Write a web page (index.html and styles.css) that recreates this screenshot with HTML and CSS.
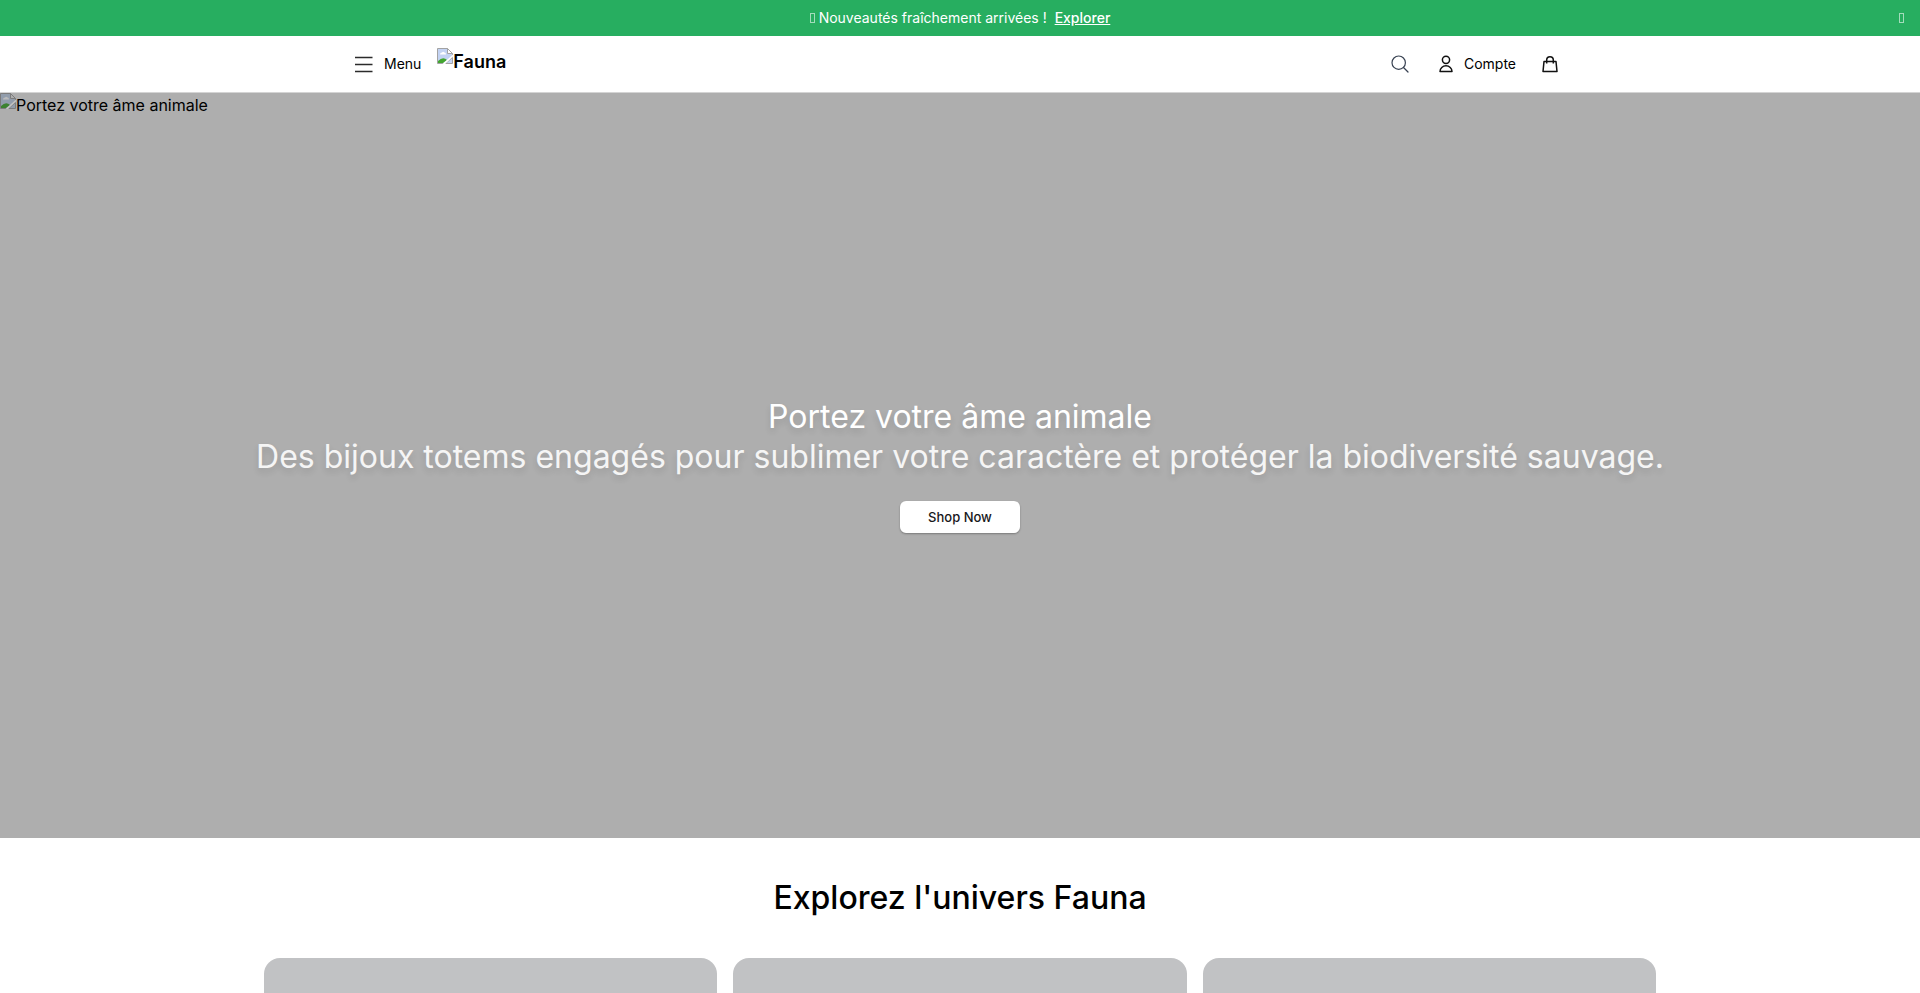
FILE: index.html
```
<!DOCTYPE html>
<html lang="fr">
<head>
    <meta charset="UTF-8">
    <meta name="viewport" content="width=device-width, initial-scale=1.0">
    <title>Fauna</title>
    <link rel="stylesheet" href="styles.css">
</head>
<body>
    <div class="banner">
        <p><span class="glyph"></span> Nouveautés fraîchement arrivées ! <a href="#univers">Explorer</a></p>
        <button class="banner-close" aria-label="Fermer"><span class="glyph"></span></button>
    </div>

    <header class="header">
        <nav class="nav">
            <div class="nav-group">
                <button class="nav-button menu-button">
                    <svg width="20" height="20" viewBox="0 0 20 20" fill="none" stroke="#2b2b2b" stroke-width="1.7">
                        <path d="M1 3.500h17.500M1 10.500h17.500M1 17.500h17.500"/>
                    </svg>
                    Menu
                </button>
                <a class="logo" href="#">
                    <svg class="broken" width="16" height="16" viewBox="0 0 16 16">
                        <path d="M.5.5h10l5 5v3l-8 7h-7z" fill="#c3d3f3" stroke="#a3a3a3"/>
                        <path d="M10.5.5v5h5z" fill="#fff" stroke="#a3a3a3"/>
                        <path d="M3 6.5q0-2 2-2 1-1.500 2.500 0 1.500 0 1.500 2z" fill="#fff"/>
                        <path d="M1 15v-2q5-5 9-1l-4 3z" fill="#42a52f"/>
                        <path d="M15.500 9.500v6h-7z" fill="#c3d3f3" stroke="#a3a3a3"/>
                        <path d="M16 6.500v2L8 16H5.500z" fill="#fff"/>
                    </svg><span>Fauna</span>
                </a>
            </div>
            <div class="nav-group nav-right">
                <button class="nav-button" aria-label="Rechercher">
                    <svg width="20" height="20" viewBox="0 0 20 20" fill="none" stroke="#374151" stroke-width="1.2" stroke-linecap="round">
                        <circle cx="8.700" cy="8.700" r="6.700"/>
                        <path d="M13.500 13.500L18 18"/>
                    </svg>
                </button>
                <a class="nav-button account" href="#">
                    <svg width="20" height="20" viewBox="0 0 20 20" fill="none" stroke="#111" stroke-width="1.5" stroke-linejoin="round">
                        <circle cx="10" cy="5.800" r="3.600"/>
                        <path d="M4 17.500a6 5.700 0 0 1 12 0z"/>
                    </svg>
                    Compte
                </a>
                <a class="nav-button" href="#" aria-label="Panier">
                    <svg width="20" height="20" viewBox="0 0 20 20" fill="none" stroke="#111" stroke-width="1.5" stroke-linejoin="round">
                        <path d="M4 7.500h12l1 10H3z"/>
                        <path d="M6.700 9.500V6a3.300 3.300 0 0 1 6.600 0v3.500"/>
                    </svg>
                </a>
            </div>
        </nav>
    </header>

    <section class="hero">
        <div class="hero-image">
            <svg class="broken" width="16" height="16" viewBox="0 0 16 16">
                <path d="M.5.5h10l5 5v3l-8 7h-7z" fill="#929dac" stroke="#7c7c7c"/>
                <path d="M10.5.5v5h5z" fill="#aeaeae" stroke="#7c7c7c"/>
                <path d="M3 6.500q0-2 2-2 1-1.500 2.500 0 1.500 0 1.500 2z" fill="#bbb"/>
                <path d="M1 15v-2q5-5 9-1l-4 3z" fill="#3c8230"/>
                <path d="M15.500 9.500v6h-7z" fill="#929dac" stroke="#7c7c7c"/>
                <path d="M16 6.500v2L8 16H5.500z" fill="#c4c4c4"/>
            </svg><span>Portez votre âme animale</span>
        </div>
        <div class="hero-content">
            <div>
                <h1>Portez votre âme animale</h1>
                <h2>Des bijoux totems engagés pour sublimer votre caractère et protéger la biodiversité sauvage.</h2>
            </div>
            <button class="shop-button">Shop Now</button>
        </div>
    </section>

    <section class="univers" id="univers">
        <h2>Explorez l'univers Fauna</h2>
        <div class="cards">
            <a class="card" href="#" aria-label="Univers 1"></a>
            <a class="card" href="#" aria-label="Univers 2"></a>
            <a class="card" href="#" aria-label="Univers 3"></a>
        </div>
    </section>
</body>
</html>
```
FILE: styles.css
```
* {
    box-sizing: border-box;
}
body {
    margin: 0;
    font-family: Inter, sans-serif;
    font-size: 16px;
    line-height: 24px;
    color: #000;
    background-color: #fff;
}
h1, h2, p {
    margin: 0;
}
a {
    color: inherit;
    text-decoration: none;
}
button {
    padding: 0;
    border: none;
    background: none;
    font-family: inherit;
    color: inherit;
    cursor: pointer;
}
.banner {
    position: relative;
    padding: 8px 16px;
    font-size: 14px;
    line-height: 20px;
    text-align: center;
    color: #fff;
    background-color: #27ae60;
}
.banner a {
    margin-left: 4px;
    font-weight: 500;
    text-decoration: underline;
}
.banner-close {
    position: absolute;
    top: 8px;
    right: 16px;
    line-height: 20px;
}
/* empty glyph box */
.glyph {
    display: inline-block;
    width: 5px;
    height: 10px;
    border: 1px solid #a3dcbb;
}
.header {
    border-bottom: 1px solid #d4d4d4;
}
.nav {
    display: flex;
    justify-content: space-between;
    align-items: center;
    max-width: 1280px;
    height: 56px;
    margin: 0 auto;
    padding: 0 40px 0 32px;
}
.nav-group {
    display: flex;
    align-items: center;
    gap: 16px;
}
.nav-right {
    gap: 24px;
}
.nav-button {
    display: flex;
    align-items: center;
    gap: 8px;
    font-size: 14px;
    line-height: 20px;
}
.menu-button {
    gap: 10px;
    padding-left: 2px;
}
.account {
    padding-left: 2px;
}
.logo {
    display: flex;
    height: 32px;
    font-size: 18px;
    line-height: 28px;
    font-weight: 600;
}
.broken {
    flex: none;
}
.hero {
    position: relative;
    height: 75vh;
    background-color: #aeaeae;
}
.hero-image {
    position: absolute;
    top: 0;
    left: 0;
    display: flex;
}
.hero-content {
    display: flex;
    flex-direction: column;
    align-items: center;
    justify-content: center;
    gap: 24px;
    height: 100%;
    text-align: center;
    color: #fff;
}
.hero-content h1,
.hero-content h2 {
    font-size: 32px;
    line-height: 40px;
    font-weight: 400;
    text-shadow: 0 4px 6px rgba(0, 0, 0, 0.12);
}
.hero-content h2 {
    color: #f5f5f5;
}
.shop-button {
    width: 120px;
    height: 32px;
    border-radius: 6px;
    font-size: 13px;
    line-height: 20px;
    font-weight: 500;
    color: #18181b;
    background-color: #fff;
    box-shadow: 0 1px 2px rgba(0, 0, 0, 0.3);
}
.univers {
    max-width: 1440px;
    margin: 0 auto;
    padding: 40px 24px;
}
.univers h2 {
    margin-bottom: 40px;
    font-size: 32px;
    line-height: 40px;
    font-weight: 500;
    text-align: center;
}
.cards {
    display: grid;
    grid-template-columns: repeat(3, 1fr);
    gap: 16px;
}
.card {
    height: 320px;
    border-radius: 16px;
    background-color: #c1c2c4;
}
```
